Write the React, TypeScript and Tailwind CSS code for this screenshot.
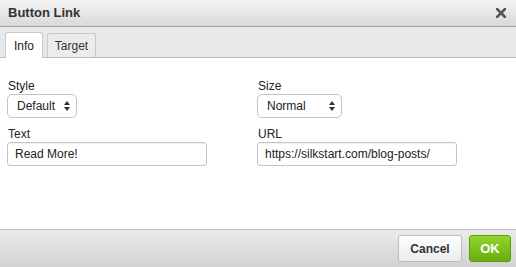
import React from 'react'

function Arrows() {
  return (
    <svg width="6" height="10" viewBox="0 0 6 10" className="ml-auto">
      <path d="M3 0 L6 4 L0 4 Z" fill="#333" />
      <path d="M3 10 L6 6 L0 6 Z" fill="#333" />
    </svg>
  )
}

function Select({ value, width }: { value: string; width: string }) {
  return (
    <div className={`${width} h-[24px] flex items-center pl-[9px] pr-[6px] bg-white border border-[#c4c4c4] rounded-[5px] text-[12px] text-[#222]`}>
      <span>{value}</span>
      <Arrows />
    </div>
  )
}

function Input({ value }: { value: string }) {
  return (
    <div className="w-[200px] h-[24px] flex items-center px-[7px] bg-white border border-[#c4c4c4] rounded-[3px] text-[12px] text-[#222] shadow-[inset_0_1px_1px_rgba(0,0,0,0.06)]">
      {value}
    </div>
  )
}

function Field({ label, children }: { label: string; children: React.ReactNode }) {
  return (
    <div className="flex flex-col">
      <div className="text-[12px] leading-[16px] text-[#222] pl-[1px]">{label}</div>
      {children}
    </div>
  )
}

export default function App() {
  return (
    <div className="w-[516px] h-[267px] flex flex-col bg-white overflow-hidden" style={{ fontFamily: '"Liberation Sans", Arial, sans-serif' }}>
      {/* cabecera */}
      <div className="h-[27px] flex items-center pl-[8px] pr-[10px] bg-gradient-to-b from-[#f4f4f4] to-[#d9d9d9] border-b border-[#9f9f9f]">
        <span className="text-[13px] font-bold text-[#333]">Button Link</span>
        <svg width="10" height="10" viewBox="0 0 10 10" className="ml-auto">
          <path d="M1 1 L9 9 M9 1 L1 9" stroke="#555" strokeWidth="2.6" strokeLinecap="square" />
        </svg>
      </div>

      {/* pestañas */}
      <div className="h-[31px] flex items-end gap-[4px] pl-[5px] bg-[#e8e8e8] border-b border-[#bdbdbd]">
        <div className="h-[26px] -mb-px w-[38px] flex items-center justify-center bg-white border border-b-0 border-[#c8c8c8] rounded-t-[3px] text-[12px] text-[#222]">
          Info
        </div>
        <div className="h-[24px] w-[49px] flex items-center justify-center bg-[#ececec] border border-b-0 border-[#c8c8c8] rounded-t-[3px] text-[12px] text-[#333]">
          Target
        </div>
      </div>

      {/* cuerpo */}
      <div className="flex-1 pt-[20px] px-[7px]">
        <div className="grid grid-cols-[250px_1fr] gap-y-[8px]">
          <Field label="Style">
            <Select value="Default" width="w-[70px]" />
          </Field>
          <Field label="Size">
            <Select value="Normal" width="w-[85px]" />
          </Field>
          <Field label="Text">
            <Input value="Read More!" />
          </Field>
          <Field label="URL">
            <Input value="https://silkstart.com/blog-posts/" />
          </Field>
        </div>
      </div>

      {/* pie */}
      <div className="h-[38px] flex items-center justify-end gap-[7px] pr-[5px] bg-gradient-to-b from-[#ebebeb] to-[#d2d2d2] border-t border-[#bcbcbc]">
        <button className="w-[64px] h-[27px] rounded-[3px] border border-[#bdbdbd] bg-gradient-to-b from-[#ffffff] to-[#ececec] text-[12px] font-bold text-[#333]">
          Cancel
        </button>
        <button className="w-[42px] h-[27px] rounded-[3px] border border-[#5f9a12] bg-gradient-to-b from-[#93d62b] to-[#67ac0f] text-[13px] font-bold text-white">
          OK
        </button>
      </div>
    </div>
  )
}
